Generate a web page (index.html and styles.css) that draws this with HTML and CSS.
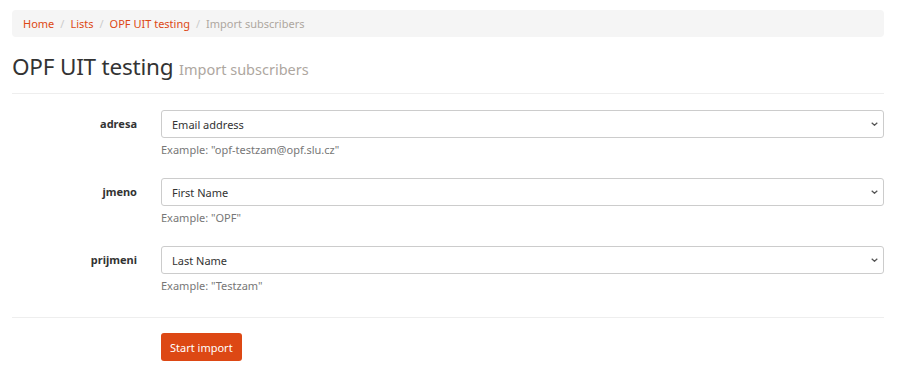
FILE: index.html
```html
<!DOCTYPE html>
<html>
<head>
<meta charset="utf-8">
<link rel="stylesheet" href="styles.css">
</head>
<body>
<div class="page">
  <nav class="breadcrumb">
    <a href="#">Home</a><span class="sep">/</span>
    <a href="#">Lists</a><span class="sep">/</span>
    <a href="#">OPF UIT testing</a><span class="sep">/</span>
    <span class="current">Import subscribers</span>
  </nav>
  <h1 class="title">OPF UIT testing <small>Import subscribers</small></h1>
  <hr class="rule">
  <form class="form">
    <div class="row">
      <label class="label">adresa</label>
      <div class="field">
        <div class="select"><span>Email address</span><svg class="chev" viewBox="0 0 7 4" width="7" height="4"><path d="M0.7 0.7 L3.5 3.3 L6.3 0.7" fill="none" stroke="#555" stroke-width="1.2"/></svg></div>
        <div class="help">Example: "opf-testzam@opf.slu.cz"</div>
      </div>
    </div>
    <div class="row">
      <label class="label">jmeno</label>
      <div class="field">
        <div class="select"><span>First Name</span><svg class="chev" viewBox="0 0 7 4" width="7" height="4"><path d="M0.7 0.7 L3.5 3.3 L6.3 0.7" fill="none" stroke="#555" stroke-width="1.2"/></svg></div>
        <div class="help">Example: "OPF"</div>
      </div>
    </div>
    <div class="row">
      <label class="label">prijmeni</label>
      <div class="field">
        <div class="select"><span>Last Name</span><svg class="chev" viewBox="0 0 7 4" width="7" height="4"><path d="M0.7 0.7 L3.5 3.3 L6.3 0.7" fill="none" stroke="#555" stroke-width="1.2"/></svg></div>
        <div class="help">Example: "Testzam"</div>
      </div>
    </div>
    <hr class="rule rule2">
    <div class="row">
      <div class="label"></div>
      <div class="field"><button type="button" class="btn">Start import</button></div>
    </div>
  </form>
</div>
</body>
</html>
```

FILE: styles.css
```css
* { box-sizing: border-box; }
html, body { margin: 0; padding: 0; background: #fff; }
body {
  font-family: "Noto Sans", "Open Sans", sans-serif;
  font-size: 11px;
  color: #333;
}
.page { padding: 10px 16px 0 12px; }
.breadcrumb {
  background: #f5f5f5;
  border-radius: 4px;
  height: 27px;
  padding: 0 11px;
  display: flex;
  align-items: center;
  font-size: 11px;
}
.breadcrumb a { color: #dd4814; text-decoration: none; }
.breadcrumb .sep { color: #ccc; padding: 0 6px; }
.breadcrumb .current { color: #aea79f; }
.title {
  margin: 16px 0 0;
  font-weight: 400;
  font-size: 22.5px;
  line-height: 28px;
  color: #333;
  letter-spacing: -0.2px;
}
.title small { font-size: 14.5px; color: #aea79f; letter-spacing: 0; }
.rule { border: 0; border-top: 1px solid #eee; margin: 10px 0 16px; }
.rule2 { margin: 23px 0 15px; }
.row {
  display: grid;
  grid-template-columns: 149px 1fr;
}
.row + .row { margin-top: 20px; }
.row.last { margin-top: 19px; }
.label {
  text-align: right;
  padding-right: 24px;
  font-weight: 700;
  line-height: 28px;
  color: #333;
}
.select {
  height: 28px;
  border: 1px solid #ccc;
  border-radius: 3px;
  display: flex;
  align-items: center;
  justify-content: space-between;
  padding: 0 5px 0 10px;
  color: #333;
  background: #fff;
}
.chev { display: block; }
.help { color: #777; margin-top: 4px; line-height: 16px; }
.btn {
  font-family: inherit;
  font-size: 11px;
  background: #dd4814;
  color: #fff;
  border: 0;
  border-radius: 3px;
  height: 28px;
  padding: 0 9px;
}
```
